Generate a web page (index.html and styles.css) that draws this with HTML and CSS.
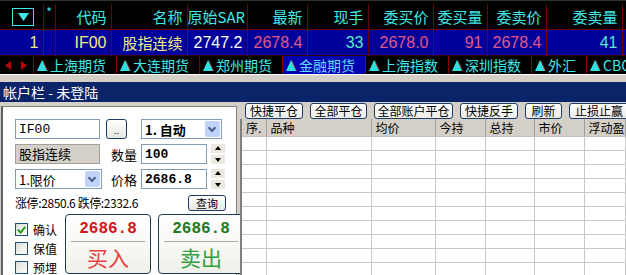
FILE: index.html
```html
<!DOCTYPE html>
<html lang="zh">
<head>
  <meta charset="UTF-8" />
  <title>行情交易 - 帐户栏</title>
  <link rel="stylesheet" href="styles.css">
</head>
<body>

  <div class="quote">
    <table class="quote_table">
      <colgroup>
        <col style="width:43px"><col style="width:12px"><col style="width:56px"><col style="width:76px">
        <col style="width:60px"><col style="width:60px"><col style="width:61px"><col style="width:65px">
        <col style="width:54px"><col style="width:59px"><col style="width:76px"><col>
      </colgroup>
      <tr class="head">
        <th class="menu_cell">
          <span class="menu_btn">
            <svg width="11" height="8" viewBox="0 0 11 8"><polygon points="0,0 11,0 5.5,8" fill="#40e8e8"/></svg>
          </span>
        </th>
        <th class="star">*</th>
        <th>代码</th>
        <th>名称</th>
        <th>原始SAR</th>
        <th>最新</th>
        <th>现手</th>
        <th>委买价</th>
        <th>委买量</th>
        <th>委卖价</th>
        <th>委卖量</th>
        <th></th>
      </tr>
      <tr class="row">
        <td class="yellow">1</td>
        <td></td>
        <td class="yellow">IF00</td>
        <td class="yellow cjk">股指连续</td>
        <td class="white">2747.2</td>
        <td class="pink">2678.4</td>
        <td class="cyan">33</td>
        <td class="pink">2678.0</td>
        <td class="pink">91</td>
        <td class="pink">2678.4</td>
        <td class="cyan">41</td>
        <td></td>
      </tr>
    </table>

    <div class="tabs">
      <div class="arrows">
        <svg width="6" height="9" viewBox="0 0 6 9"><polygon points="6,0 6,9 0,4.5" fill="#c00000"/></svg>
        <svg width="6" height="9" viewBox="0 0 6 9"><polygon points="0,0 0,9 6,4.5" fill="#c00000"/></svg>
      </div>
      <div class="tab"><span class="pyr"></span>上海期货</div>
      <div class="tab"><span class="pyr"></span>大连期货</div>
      <div class="tab"><span class="pyr"></span>郑州期货</div>
      <div class="tab active"><span class="pyr"></span>金融期货</div>
      <div class="tab"><span class="pyr"></span>上海指数</div>
      <div class="tab"><span class="pyr"></span>深圳指数</div>
      <div class="tab"><span class="pyr"></span>外汇</div>
      <div class="tab"><span class="pyr"></span>CBOT</div>
    </div>
  </div>

  <div class="strip"></div>
  <div class="title_bar">帐户栏 - 未登陆</div>

  <div class="main">
    <div class="order_panel">
      <div class="form_row">
        <input class="field code_input" type="text" value="IF00" />
        <button class="dots_btn">..</button>
        <div class="select mode_select"><span>1. 自动</span><span class="drop"></span></div>
      </div>

      <div class="form_row">
        <div class="name_box">股指连续</div>
        <span class="label">数量</span>
        <input class="field num_input" type="text" value="100" />
        <div class="spin"><span class="up"></span><span class="down"></span></div>
      </div>

      <div class="form_row">
        <div class="select type_select"><span class="plain">1.限价</span><span class="drop"></span></div>
        <span class="label">价格</span>
        <input class="field num_input" type="text" value="2686.8" />
        <div class="spin"><span class="up"></span><span class="down"></span></div>
      </div>

      <div class="form_row limits_row">
        <span class="limits">涨停:2850.6 跌停:2332.6</span>
        <button class="query_btn">查询</button>
      </div>

      <div class="trade_row">
        <div class="checks">
          <label class="check"><span class="box on"></span>确认</label>
          <label class="check"><span class="box"></span>保值</label>
          <label class="check"><span class="box"></span>预埋</label>
        </div>
        <div class="trade_btn buy">
          <div class="price">2686.8</div>
          <div class="action">买入</div>
        </div>
        <div class="trade_btn sell">
          <div class="price">2686.8</div>
          <div class="action">卖出</div>
        </div>
      </div>
    </div>

    <div class="position_panel">
      <div class="toolbar">
        <button class="tool_btn w58">快捷平仓</button>
        <button class="tool_btn w57">全部平仓</button>
        <button class="tool_btn w79">全部账户平仓</button>
        <button class="tool_btn w58">快捷反手</button>
        <button class="tool_btn w37">刷新</button>
        <button class="tool_btn w60">止损止赢</button>
      </div>

      <table class="grid">
        <colgroup>
          <col style="width:25px"><col style="width:105px"><col style="width:64px"><col style="width:50px">
          <col style="width:49px"><col style="width:50px"><col>
        </colgroup>
        <tr class="grid_head">
          <th>序.</th><th>品种</th><th>均价</th><th>今持</th><th>总持</th><th>市价</th><th>浮动盈亏</th>
        </tr>
        <tr><td></td><td></td><td></td><td></td><td></td><td></td><td></td></tr>
        <tr><td></td><td></td><td></td><td></td><td></td><td></td><td></td></tr>
        <tr><td></td><td></td><td></td><td></td><td></td><td></td><td></td></tr>
        <tr><td></td><td></td><td></td><td></td><td></td><td></td><td></td></tr>
        <tr><td></td><td></td><td></td><td></td><td></td><td></td><td></td></tr>
        <tr><td></td><td></td><td></td><td></td><td></td><td></td><td></td></tr>
        <tr><td></td><td></td><td></td><td></td><td></td><td></td><td></td></tr>
        <tr><td></td><td></td><td></td><td></td><td></td><td></td><td></td></tr>
        <tr><td></td><td></td><td></td><td></td><td></td><td></td><td></td></tr>
        <tr><td></td><td></td><td></td><td></td><td></td><td></td><td></td></tr>
      </table>
    </div>
  </div>

</body>
</html>
```

FILE: styles.css
```css
body {
  margin: 0;
  width: 626px;
  height: 275px;
  overflow: hidden;
  background-color: #d4d0c8;
  font-family: "Noto Sans CJK SC", sans-serif;
  font-size: 12px;
}

/* quote board */

.quote {
  background-color: #000;
  padding-top: 3px;
  border-top: 1px solid #303030;
  height: 70px;
  overflow: hidden;
}

.quote_table {
  width: 626px;
  table-layout: fixed;
  border-collapse: collapse;
}

.quote_table th,
.quote_table td {
  border-left: 1px solid #6a0000;
  padding: 0 4px 0 0;
  text-align: right;
  white-space: nowrap;
  overflow: hidden;
  line-height: 18px;
}

.quote_table th:first-child,
.quote_table td:first-child {
  border-left: none;
}

.head th {
  height: 25px;
  color: #40e8e8;
  font-size: 15px;
  font-weight: normal;
  font-family: "Noto Sans CJK SC", sans-serif;
  border-bottom: 1px solid #6a0000;
}

.head th.menu_cell {
  text-align: left;
  padding-left: 12px;
}

.menu_btn {
  display: flex;
  width: 20px;
  height: 16px;
  border: 1px solid #40e8e8;
  align-items: center;
  justify-content: center;
}

.head th.star {
  text-align: center;
  padding: 0;
  font-size: 12px;
  line-height: 16px;
  vertical-align: top;
}

.row td {
  height: 25px;
  background-color: #00009a;
  font-family: "Liberation Sans", Arial, sans-serif;
  font-size: 16px;
}

.row td.cjk {
  font-family: "Noto Sans CJK SC", sans-serif;
  font-size: 15px;
}

.yellow { color: #f0f080; }
.white { color: #ffffff; }
.pink { color: #e05a88; }
.cyan { color: #58e8d0; }

.tabs {
  display: flex;
  height: 18px;
  align-items: stretch;
  border-top: 1px solid #400000;
}

.arrows {
  display: flex;
  width: 34px;
  flex-shrink: 0;
  align-items: center;
  gap: 10px;
  padding-left: 5px;
  box-sizing: border-box;
  border-right: 1px solid #800000;
}

.tab {
  display: flex;
  align-items: center;
  gap: 3px;
  padding: 0 10px 0 3px;
  color: #40e8e8;
  font-size: 14px;
  line-height: 18px;
  border-right: 1px solid #800000;
  white-space: nowrap;
}

.tab.active {
  background-color: #0000b0;
  color: #60d8ff;
}

.pyr {
  width: 0;
  height: 0;
  border-left: 5px solid transparent;
  border-right: 5px solid transparent;
  border-bottom: 11px solid #30e0e0;
  filter: drop-shadow(1px 0 0 #a03030);
}

.strip {
  height: 7px;
  background-color: #d4d0c8;
  border-top: 1px solid #ffffff;
}

.title_bar {
  height: 20px;
  line-height: 20px;
  background-color: #0a246a;
  color: #ffffff;
  font-size: 14px;
  padding-left: 3px;
}

/* lower area */

.main {
  display: flex;
  height: 173px;
}

.order_panel {
  width: 236px;
  margin: 4px 0 0 1px;
  background-color: #ffffff;
  border-top: 1px solid #808080;
  border-left: 2px solid #606060;
  border-right: 1px solid #808080;
  padding: 12px 0 0 12px;
  box-sizing: border-box;
  display: flex;
  flex-direction: column;
  gap: 5px;
}

.form_row {
  display: flex;
  align-items: center;
  height: 20px;
}

.field {
  height: 20px;
  box-sizing: border-box;
  border: 1px solid #7f9db9;
  padding: 0 3px;
  font-family: "Liberation Mono", monospace;
  font-size: 13px;
  color: #000;
  background: #fff;
  outline: none;
}

.code_input {
  width: 85px;
}

.dots_btn {
  width: 21px;
  height: 20px;
  margin-left: 6px;
  border: 1px solid #1c3c6c;
  border-radius: 3px;
  background: linear-gradient(#ffffff, #e8e8e0);
  font-size: 10px;
  padding: 0;
  line-height: 22px;
}

.select {
  height: 20px;
  box-sizing: border-box;
  border: 1px solid #7f9db9;
  display: flex;
  align-items: center;
  justify-content: space-between;
  padding: 0 1px 0 3px;
  background: #fff;
}

.select span {
  font-weight: bold;
  font-size: 13px;
  font-family: "Noto Sans CJK SC", sans-serif;
}

.select span.plain {
  font-weight: normal;
}

.mode_select {
  width: 81px;
  margin-left: 14px;
}

.type_select {
  width: 87px;
}

.drop {
  width: 15px;
  height: 16px;
  background-color: #c1d3fb;
  border-radius: 2px;
  position: relative;
}

.drop::after {
  content: "";
  position: absolute;
  left: 4px;
  top: 4px;
  width: 4px;
  height: 4px;
  border-right: 2px solid #4d6185;
  border-bottom: 2px solid #4d6185;
  transform: rotate(45deg);
}

.name_box {
  width: 85px;
  height: 20px;
  box-sizing: border-box;
  background-color: #d4d0c8;
  border: 1px solid #a0a0a0;
  line-height: 18px;
  padding-left: 3px;
  font-size: 13px;
}

.label {
  width: 30px;
  margin-left: 11px;
  font-size: 13px;
}

.type_select + .label {
  margin-left: 9px;
}

.num_input {
  width: 66px;
  font-weight: bold;
}

.spin {
  display: flex;
  flex-direction: column;
  justify-content: space-between;
  height: 20px;
  margin-left: 4px;
}

.spin span {
  width: 14px;
  height: 9px;
  background-color: #ece9e0;
  position: relative;
}

.spin span::after {
  content: "";
  position: absolute;
  left: 4px;
  top: 2px;
  border-left: 3px solid transparent;
  border-right: 3px solid transparent;
}

.spin .up::after {
  border-bottom: 4px solid #000;
}

.spin .down::after {
  border-top: 4px solid #000;
  top: 3px;
}

.limits_row {
  height: 18px;
  justify-content: space-between;
  width: 211px;
}

.limits {
  font-family: "Noto Sans CJK SC", sans-serif;
  font-size: 12px;
  letter-spacing: -0.4px;
  white-space: nowrap;
}

.query_btn {
  width: 38px;
  height: 16px;
  padding: 0;
  border: 1px solid #1c3c6c;
  border-radius: 3px;
  background: linear-gradient(#ffffff, #e8e8e0);
  font-size: 11px;
  line-height: 14px;
  font-family: "Noto Sans CJK SC", sans-serif;
}

.trade_row {
  display: flex;
  gap: 7px;
  margin-top: -2px;
}

.checks {
  display: flex;
  flex-direction: column;
  gap: 3px;
  padding-top: 7px;
  width: 43px;
  flex-shrink: 0;
}

.check {
  display: flex;
  align-items: center;
  gap: 5px;
  font-size: 12px;
  height: 16px;
  white-space: nowrap;
}

.box {
  width: 11px;
  height: 11px;
  flex-shrink: 0;
  border: 1px solid #1c5180;
  background: linear-gradient(135deg, #dcdcd7, #ffffff);
  position: relative;
}

.box.on::after {
  content: "";
  position: absolute;
  left: 3px;
  top: 1px;
  width: 3px;
  height: 6px;
  border-right: 2px solid #21a121;
  border-bottom: 2px solid #21a121;
  transform: rotate(40deg);
}

.trade_btn {
  width: 74px;
  height: 58px;
  flex-shrink: 0;
  border: 1px solid #1c3c5c;
  border-radius: 4px;
  background: linear-gradient(#ffffff, #f0f0ea);
  display: flex;
  flex-direction: column;
  align-items: center;
  padding: 0 5px;
}

.trade_btn .price {
  width: 100%;
  text-align: center;
  font-family: "Liberation Mono", monospace;
  font-weight: bold;
  font-size: 16px;
  height: 26px;
  line-height: 28px;
  border-bottom: 1px solid #a8a8a8;
}

.trade_btn .action {
  font-size: 21px;
  line-height: 30px;
}

.buy .price { color: #d01820; }
.buy .action { color: #e84040; }
.sell .price { color: #207820; }
.sell .action { color: #30a040; }

/* positions */

.position_panel {
  flex: 1;
  display: flex;
  flex-direction: column;
  padding-left: 3px;
}

.toolbar {
  display: flex;
  height: 25px;
  align-items: center;
  padding: 1px 0 0 5px;
  gap: 7px;
  box-sizing: border-box;
}

.tool_btn {
  height: 16px;
  padding: 0;
  border: 1px solid #1c3c6c;
  border-radius: 3px;
  background: linear-gradient(#ffffff, #ecebe6);
  font-family: "Noto Sans CJK SC", sans-serif;
  font-size: 12px;
  line-height: 14px;
  flex-shrink: 0;
}

.w58 { width: 58px; }
.w57 { width: 57px; }
.w79 { width: 79px; }
.w37 { width: 37px; }
.w60 { width: 60px; }

.grid {
  width: 386px;
  table-layout: fixed;
  border-collapse: collapse;
  border-left: 2px solid #808080;
  background: #fff;
}

.grid_head th {
  height: 16px;
  background-color: #d4d0c8;
  font-weight: normal;
  font-size: 12px;
  text-align: left;
  padding: 0 0 0 4px;
  border-right: 1px solid #a0a0a0;
  border-bottom: 1px solid #c0c0c0;
  white-space: nowrap;
  overflow: hidden;
}

.grid td {
  height: 13px;
  border-right: 1px solid #c8c8c8;
  border-bottom: 1px solid #c8c8c8;
  padding: 0;
}
```
